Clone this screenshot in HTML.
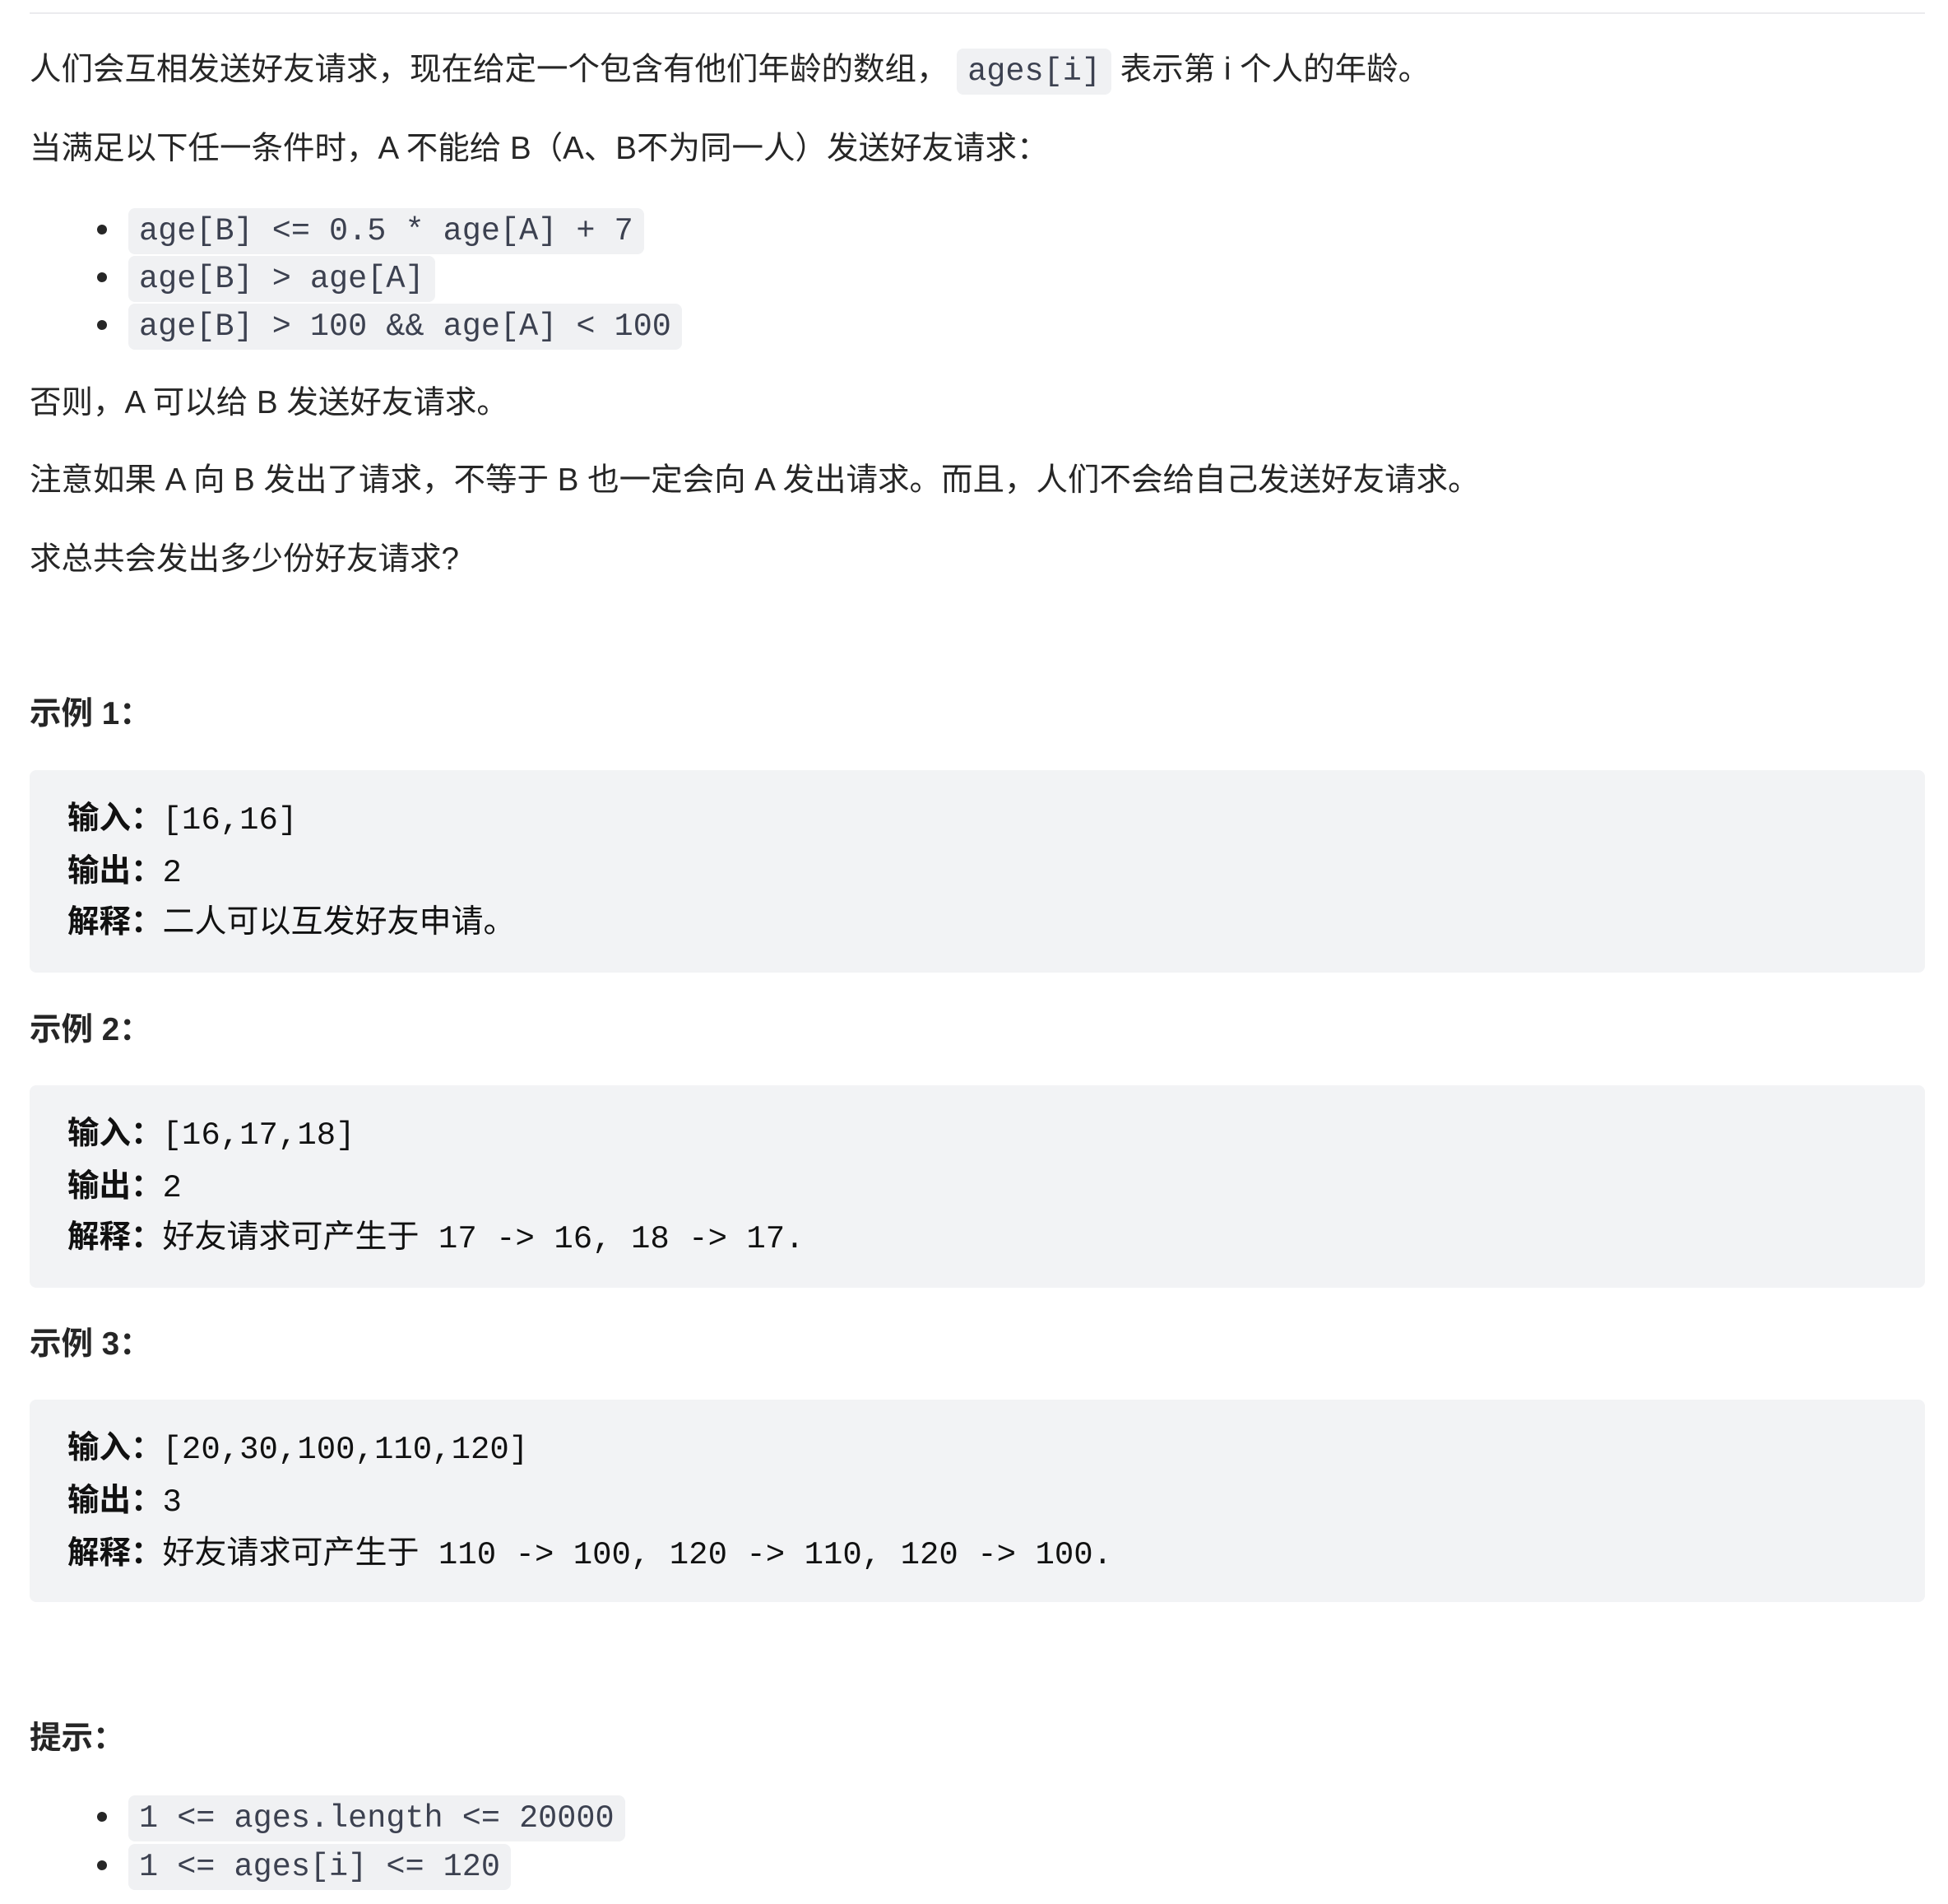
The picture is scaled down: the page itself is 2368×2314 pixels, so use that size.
<!DOCTYPE html>
<html><head><meta charset="utf-8"><style>
html,body{margin:0;padding:0;background:#fff;}
body{width:2368px;height:2314px;position:relative;overflow:hidden;font-family:"Liberation Sans","Noto Sans CJK SC",sans-serif;color:#262626;font-size:38.5px;}
.hr{position:absolute;left:36px;top:15px;width:2304px;height:2px;background:#ebebee;}
.l{position:absolute;left:36px;height:60px;line-height:60px;white-space:pre;}
.b{font-weight:bold;}
code{font-family:"Liberation Mono","Noto Sans CJK SC",monospace;font-size:38.5px;color:#3c4150;background:#f0f1f3;border-radius:8px;padding:6px 13px;}
.li{position:absolute;left:156px;height:60px;line-height:60px;white-space:pre;}
.dot{position:absolute;left:118px;width:12px;height:12px;border-radius:50%;background:#262626;}
.pre{position:absolute;left:36px;width:2304px;height:246px;background:#f2f3f5;border-radius:8px;}
.pl{position:absolute;left:82px;height:60px;line-height:60px;white-space:pre;font-family:"Liberation Mono","Noto Sans CJK SC",monospace;font-size:39px;color:#111;}
.pl b{font-family:"Liberation Sans","Noto Sans CJK SC",sans-serif;font-size:38.5px;}
</style></head><body>
<div class="hr"></div>
<div class="l" style="top:55px">人们会互相发送好友请求，现在给定一个包含有他们年龄的数组， <code>ages[i]</code> 表示第 i 个人的年龄。</div>
<div class="l" style="top:151px">当满足以下任一条件时，A 不能给 B（A、B不为同一人）发送好友请求：</div>
<div class="dot" style="top:273px"></div><div class="li" style="top:249px"><code>age[B] &lt;= 0.5 * age[A] + 7</code></div>
<div class="dot" style="top:331px"></div><div class="li" style="top:307px"><code>age[B] &gt; age[A]</code></div>
<div class="dot" style="top:389px"></div><div class="li" style="top:365px"><code>age[B] &gt; 100 &amp;&amp; age[A] &lt; 100</code></div>
<div class="l" style="top:460px">否则，A 可以给 B 发送好友请求。</div>
<div class="l" style="top:554px">注意如果 A 向 B 发出了请求，不等于 B 也一定会向 A 发出请求。而且，人们不会给自己发送好友请求。</div>
<div class="l" style="top:650px">求总共会发出多少份好友请求?</div>

<div class="l b" style="top:838px">示例 1：</div>
<div class="pre" style="top:936px"></div>
<div class="pl" style="top:965px"><b>输入：</b>[16,16]</div>
<div class="pl" style="top:1029px"><b>输出：</b>2</div>
<div class="pl" style="top:1091px"><b>解释：</b>二人可以互发好友申请。</div>

<div class="l b" style="top:1222px">示例 2：</div>
<div class="pre" style="top:1319px"></div>
<div class="pl" style="top:1348px"><b>输入：</b>[16,17,18]</div>
<div class="pl" style="top:1412px"><b>输出：</b>2</div>
<div class="pl" style="top:1474px"><b>解释：</b>好友请求可产生于 17 -&gt; 16, 18 -&gt; 17.</div>

<div class="l b" style="top:1604px">示例 3：</div>
<div class="pre" style="top:1701px"></div>
<div class="pl" style="top:1730px"><b>输入：</b>[20,30,100,110,120]</div>
<div class="pl" style="top:1794px"><b>输出：</b>3</div>
<div class="pl" style="top:1858px"><b>解释：</b>好友请求可产生于 110 -&gt; 100, 120 -&gt; 110, 120 -&gt; 100.</div>

<div class="l b" style="top:2083px">提示：</div>
<div class="dot" style="top:2202px"></div><div class="li" style="top:2178px"><code>1 &lt;= ages.length &lt;= 20000</code></div>
<div class="dot" style="top:2261px"></div><div class="li" style="top:2237px"><code>1 &lt;= ages[i] &lt;= 120</code></div>
</body></html>
